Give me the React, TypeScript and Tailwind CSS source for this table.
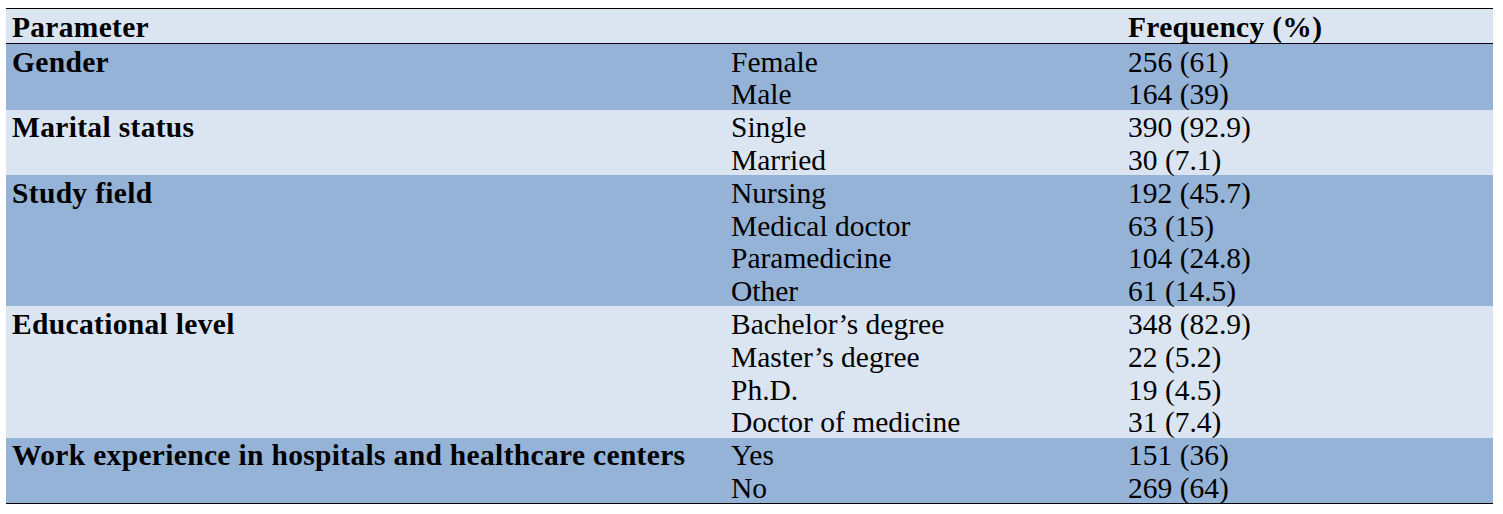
import React from "react";

type Group = { label: string; dark: boolean; items: [string, string][] };

const groups: Group[] = [
  { label: "Gender", dark: true, items: [["Female", "256 (61)"], ["Male", "164 (39)"]] },
  { label: "Marital status", dark: false, items: [["Single", "390 (92.9)"], ["Married", "30 (7.1)"]] },
  {
    label: "Study field",
    dark: true,
    items: [
      ["Nursing", "192 (45.7)"],
      ["Medical doctor", "63 (15)"],
      ["Paramedicine", "104 (24.8)"],
      ["Other", "61 (14.5)"],
    ],
  },
  {
    label: "Educational level",
    dark: false,
    items: [
      ["Bachelor\u2019s degree", "348 (82.9)"],
      ["Master\u2019s degree", "22 (5.2)"],
      ["Ph.D.", "19 (4.5)"],
      ["Doctor of medicine", "31 (7.4)"],
    ],
  },
  {
    label: "Work experience in hospitals and healthcare centers",
    dark: true,
    items: [["Yes", "151 (36)"], ["No", "269 (64)"]],
  },
];

export default function App() {
  return (
    <div className="w-[1503px] h-[514px] bg-white pt-[8px] pl-[6px]" style={{ fontFamily: '"Liberation Serif", serif' }}>
      <table className="w-[1487px] border-collapse text-[29.5px] text-black table-fixed">
        <colgroup>
          <col className="w-[719px]" />
          <col className="w-[397px]" />
          <col className="w-[371px]" />
        </colgroup>
        <thead>
          <tr className="bg-[#dbe5f1] border-t border-b border-black h-[35px]">
            <th className="text-left font-bold tracking-[0.3px] pl-[6px] pt-[2.7px] leading-[31.3px] align-top">Parameter</th>
            <th></th>
            <th className="text-left font-bold tracking-[0.3px] pl-[6px] pt-[2.7px] leading-[31.3px] align-top">Frequency (%)</th>
          </tr>
        </thead>
        <tbody className="border-b border-black">
          {groups.map((g) =>
            g.items.map(([name, val], i) => (
              <tr key={g.label + name} className={g.dark ? "bg-[#95b3d7]" : "bg-[#dbe5f1]"}>
                {i === 0 && (
                  <td rowSpan={g.items.length} className="align-top font-bold tracking-[0.33px] pl-[6px] pt-[2.7px] leading-[30.1px] whitespace-nowrap">
                    {g.label}
                  </td>
                )}
                <td className="pl-[6px] pt-[2.7px] leading-[30.1px] align-top h-[32.8px]">{name}</td>
                <td className="pl-[6px] pt-[2.7px] leading-[30.1px] align-top h-[32.8px]">{val}</td>
              </tr>
            ))
          )}
        </tbody>
      </table>
    </div>
  );
}
